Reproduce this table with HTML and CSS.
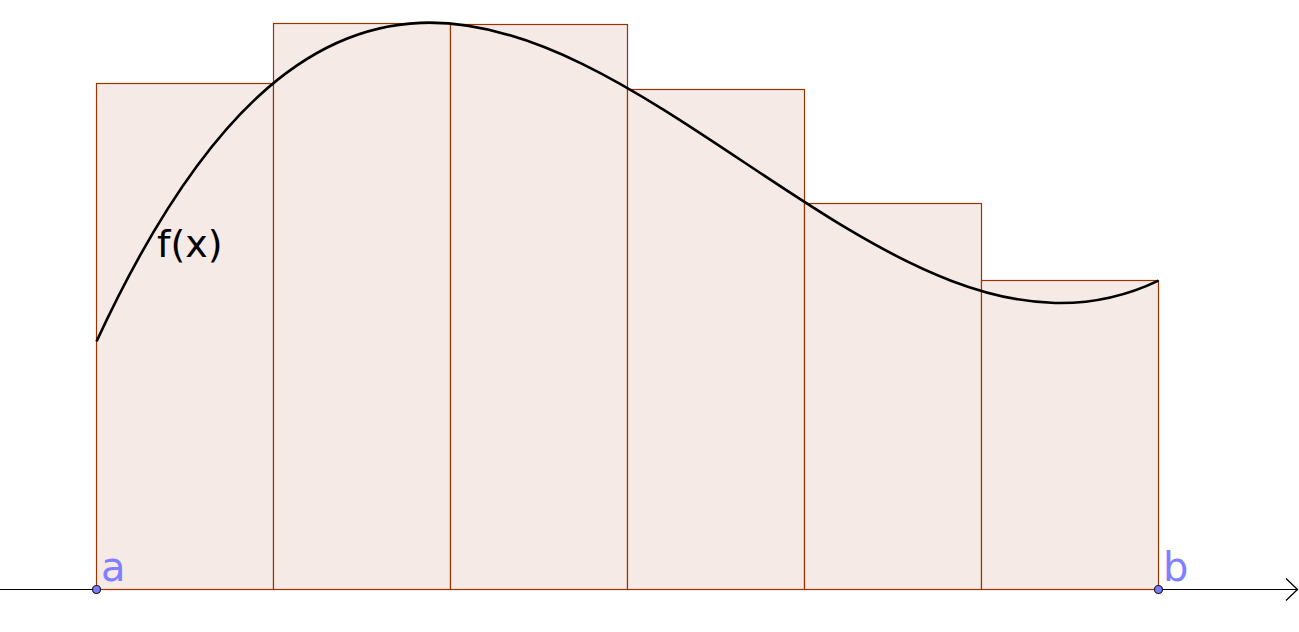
FILE: index.html
```html
<!DOCTYPE html>
<html>
<head>
<meta charset="utf-8">
<link rel="stylesheet" href="styles.css">
</head>
<body>
<div class="canvas">
<svg class="graph" width="1299" height="632" viewBox="0 0 1299 632" xmlns="http://www.w3.org/2000/svg">
  <g class="axis">
    <line x1="0" y1="589.5" x2="1298" y2="589.5"/>
    <polyline points="1286,578.5 1297.5,589.5 1286,600.5"/>
  </g>
  <g class="bars">
    <rect x="96.5" y="83.5" width="177" height="506"/>
    <rect x="273.5" y="23.5" width="177" height="566"/>
    <rect x="450.5" y="24.5" width="177" height="565"/>
    <rect x="627.5" y="89.5" width="177" height="500"/>
    <rect x="804.5" y="203.5" width="177" height="386"/>
    <rect x="981.5" y="280.5" width="177" height="309"/>
  </g>
  <path class="curve" d="M96.5 341.5 C450 -423.3 804 450.3 1158.5 280.6"/>
  <text class="fname" x="157" y="257">f(x)</text>
  <g class="pts">
    <circle cx="96.5" cy="589.5" r="4"/>
    <circle cx="1158.5" cy="589.5" r="4"/>
  </g>
  <text class="plabel" x="101" y="581">a</text>
  <text class="plabel" x="1163" y="581">b</text>
</svg>
</div>
</body>
</html>
```
FILE: styles.css
```css
html, body {
  margin: 0;
  padding: 0;
  background: #ffffff;
}
.canvas {
  width: 1299px;
  height: 632px;
  overflow: hidden;
}
.graph {
  display: block;
}
.axis line {
  stroke: #000000;
  stroke-width: 1;
}
.axis polyline {
  fill: none;
  stroke: #000000;
  stroke-width: 1.3;
}
.bars rect {
  fill: #f5eae5;
  stroke: #993300;
  stroke-width: 1.2;
}
.curve {
  fill: none;
  stroke: #000000;
  stroke-width: 2.6;
}
.fname {
  font-family: "DejaVu Sans", sans-serif;
  font-size: 38px;
  fill: #000000;
}
.pts circle {
  fill: #7b7bff;
  stroke: #1a1a1a;
  stroke-width: 1.2;
}
.plabel {
  font-family: "DejaVu Sans", sans-serif;
  font-size: 40px;
  fill: #8080ff;
}
```
